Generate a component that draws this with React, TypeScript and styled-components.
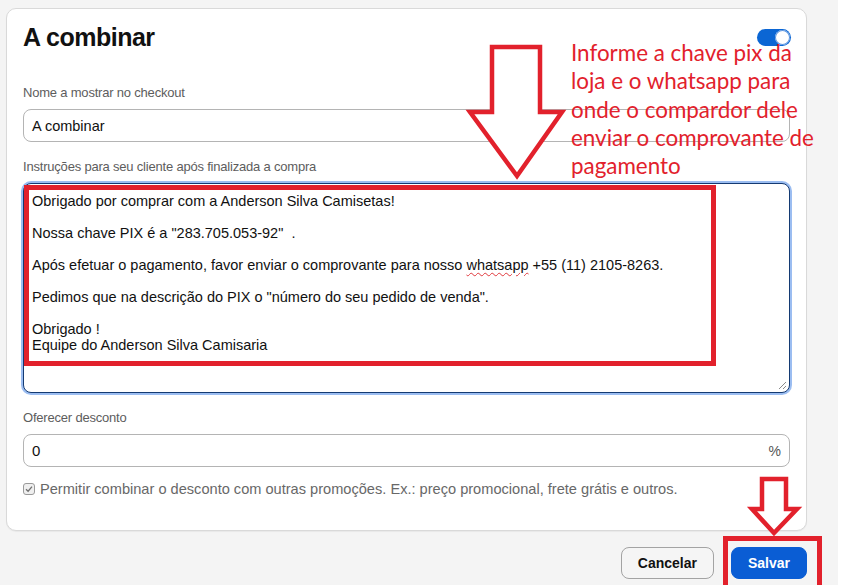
import React from "react";
import styled, { createGlobalStyle } from "styled-components";

const GlobalStyle = createGlobalStyle`
  html, body { margin: 0; padding: 0; background: #ffffff; }
  body { font-family: "Liberation Sans", Arial, sans-serif; color: #111; }
  * { box-sizing: border-box; }
`;

const RED = "#e2212c";

const Page = styled.div`
  position: relative;
  width: 838px;
  height: 585px;
  background: #f4f4f4;
  padding: 8px 0 0 6px;
`;

const Column = styled.div`
  width: 801px;
  display: flex;
  flex-direction: column;
`;

const Card = styled.section`
  background: #ffffff;
  border: 1px solid #d9d9d9;
  border-radius: 10px;
  box-shadow: 0 1px 1px rgba(0, 0, 0, 0.05);
  padding: 13px 16px 32px 16px;
  display: flex;
  flex-direction: column;
  gap: 17px;
`;

const Header = styled.div`
  display: flex;
  align-items: center;
  justify-content: space-between;
  height: 30px;
  margin-bottom: 16px;
`;

const Title = styled.h1`
  margin: 0;
  font-size: 25px;
  line-height: 30px;
  font-weight: 700;
  letter-spacing: -0.5px;
  color: #111;
`;

const Toggle = styled.div<{ $on: boolean }>`
  position: relative;
  width: 34px;
  height: 17px;
  margin-right: -1px;
  border-radius: 9px;
  background: ${(p) => (p.$on ? "#0b66d4" : "#bbb")};
  &::after {
    content: "";
    position: absolute;
    top: 1px;
    ${(p) => (p.$on ? "right: 1px;" : "left: 1px;")}
    width: 15px;
    height: 15px;
    border-radius: 50%;
    background: #fff;
    box-shadow: inset 0 0 0 1px #5b95e0;
  }
`;

const Field = styled.div`
  display: flex;
  flex-direction: column;
`;

const Label = styled.label`
  font-size: 13px;
  line-height: 16px;
  color: #5d5d5d;
  letter-spacing: -0.2px;
  margin-bottom: 8px;
`;

const InputBox = styled.div`
  height: 33px;
  border: 1px solid #b4b4b4;
  border-radius: 8px;
  background: #fff;
  display: flex;
  align-items: center;
  justify-content: space-between;
  padding: 0 8px;
  color: #111;
`;

const Value = styled.span<{ $size?: number }>`
  font-size: ${(p) => p.$size ?? 14.5}px;
`;

const Suffix = styled.span`
  font-size: 14px;
  color: #555;
`;

const TextArea = styled.div`
  position: relative;
  height: 210px;
  border: 1px solid #143a72;
  border-radius: 8px;
  box-shadow: 0 0 0 2px #9bbdf1;
  background: #fff;
  padding: 9px 8px;
  font-size: 14.5px;
  line-height: 16px;
  color: #111;
`;

const TextLine = styled.div`
  min-height: 16px;
  white-space: pre;
`;

const Misspelled = styled.span`
  text-decoration: underline wavy #e0383c;
  text-decoration-thickness: 1px;
  text-underline-offset: 2px;
`;

const Grip = styled.svg`
  position: absolute;
  right: 2px;
  bottom: 2px;
  width: 9px;
  height: 9px;
`;

const CheckRow = styled.div`
  display: flex;
  align-items: center;
  gap: 5px;
  margin-top: -4px;
  font-size: 14.6px;
  line-height: 18px;
  color: #686868;
`;

const CheckBox = styled.span`
  width: 12px;
  height: 12px;
  border: 1px solid #9a9a9a;
  border-radius: 3px;
  background: #efefef;
  display: flex;
  align-items: center;
  justify-content: center;
`;

const Actions = styled.div`
  display: flex;
  justify-content: flex-end;
  gap: 17px;
  margin-top: 16px;
`;

const Button = styled.button<{ $primary?: boolean }>`
  height: 32px;
  padding: 0 16px;
  border-radius: 8px;
  font-family: "Liberation Sans", Arial, sans-serif;
  font-size: 14px;
  font-weight: 700;
  border: 1px solid ${(p) => (p.$primary ? "#0a5dd4" : "#a3a3a3")};
  background: ${(p) => (p.$primary ? "#0a5dd4" : "#f5f5f5")};
  color: ${(p) => (p.$primary ? "#fff" : "#111")};
`;

/* ---------- annotations laid over the page ---------- */

const RedFrame = styled.div<{ $x: number; $y: number; $w: number; $h: number }>`
  position: absolute;
  left: ${(p) => p.$x}px;
  top: ${(p) => p.$y}px;
  width: ${(p) => p.$w}px;
  height: ${(p) => p.$h}px;
  border: 5px solid ${RED};
  pointer-events: none;
`;

const ArrowSvg = styled.svg<{ $x: number; $y: number }>`
  position: absolute;
  left: ${(p) => p.$x}px;
  top: ${(p) => p.$y}px;
  overflow: visible;
  pointer-events: none;
`;

const Note = styled.p`
  position: absolute;
  left: 571px;
  top: 39px;
  margin: 0;
  font-family: Lato, "Open Sans", sans-serif;
  font-size: 22.4px;
  line-height: 28.3px;
  color: ${RED};
  white-space: nowrap;
  pointer-events: none;
`;

function DownArrow({
  x,
  y,
  w,
  h,
  points,
}: {
  x: number;
  y: number;
  w: number;
  h: number;
  points: string;
}) {
  return (
    <ArrowSvg $x={x} $y={y} width={w} height={h} viewBox={`0 0 ${w} ${h}`}>
      <polygon
        points={points}
        fill="#ffffff"
        stroke={RED}
        strokeWidth={4.5}
        strokeLinejoin="miter"
      />
    </ArrowSvg>
  );
}

const instructions: React.ReactNode[] = [
  "Obrigado por comprar com a Anderson Silva Camisetas!",
  "",
  'Nossa chave PIX é a "283.705.053-92"  .',
  "",
  <>
    Após efetuar o pagamento, favor enviar o comprovante para nosso{" "}
    <Misspelled>whatsapp</Misspelled> +55 (11) 2105-8263.
  </>,
  "",
  'Pedimos que na descrição do PIX o "número do seu pedido de venda".',
  "",
  "Obrigado !",
  "Equipe do Anderson Silva Camisaria",
];

export default function App() {
  return (
    <>
      <GlobalStyle />
      <Page>
        <Column>
          <Card>
            <Header>
              <Title>A combinar</Title>
              <Toggle $on />
            </Header>

            <Field>
              <Label>Nome a mostrar no checkout</Label>
              <InputBox>
                <Value>A combinar</Value>
              </InputBox>
            </Field>

            <Field>
              <Label>Instruções para seu cliente após finalizada a compra</Label>
              <TextArea>
                {instructions.map((line, i) => (
                  <TextLine key={i}>{line}</TextLine>
                ))}
                <Grip viewBox="0 0 9 9">
                  <path d="M8 1 L1 8 M8 5 L5 8" stroke="#8a8a8a" strokeWidth="1" />
                </Grip>
              </TextArea>
            </Field>

            <Field>
              <Label>Oferecer desconto</Label>
              <InputBox>
                <Value $size={15}>0</Value>
                <Suffix>%</Suffix>
              </InputBox>
            </Field>

            <CheckRow>
              <CheckBox>
                <svg width="8" height="8" viewBox="0 0 8 8">
                  <path
                    d="M1 4.2 L3.1 6.2 L7 1.6"
                    fill="none"
                    stroke="#707070"
                    strokeWidth="1.3"
                  />
                </svg>
              </CheckBox>
              Permitir combinar o desconto com outras promoções. Ex.: preço
              promocional, frete grátis e outros.
            </CheckRow>
          </Card>

          <Actions>
            <Button>Cancelar</Button>
            <Button $primary>Salvar</Button>
          </Actions>
        </Column>

        <RedFrame $x={24} $y={185} $w={692} $h={181} />
        <RedFrame $x={723} $y={536} $w={99} $h={60} />
        <DownArrow
          x={466}
          y={43}
          w={100}
          h={138}
          points="26,4 74,4 74,69 96,69 51,133 4,69 26,69"
        />
        <DownArrow
          x={748}
          y={475}
          w={54}
          h={62}
          points="14,4 38,4 38,34 49,34 26,58 4,34 14,34"
        />
        <Note>
          Informe a chave pix da
          <br />
          loja e o whatsapp para
          <br />
          onde o compardor dele
          <br />
          enviar o comprovante de
          <br />
          pagamento
        </Note>
      </Page>
    </>
  );
}
